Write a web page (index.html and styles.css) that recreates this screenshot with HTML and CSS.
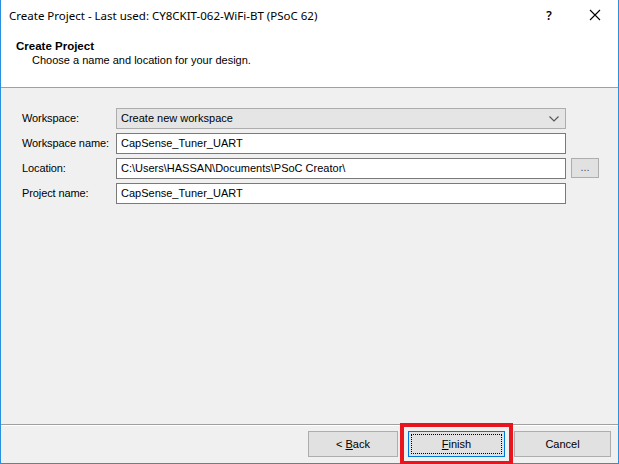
FILE: index.html
```html
<!DOCTYPE html>
<html lang="en">
<head>
  <meta charset="UTF-8">
  <title>Create Project</title>
  <link rel="stylesheet" href="styles.css">
</head>
<body>
  <div class="dialog">
    <div class="titlebar">
      <span class="title">Create Project - Last used: CY8CKIT-062-WiFi-BT (PSoC 62)</span>
      <span class="help">?</span>
      <span class="close">
        <svg width="12" height="12" viewBox="0 0 12 12"><path d="M1 1L11 11M11 1L1 11" stroke="#000" stroke-width="1.1" fill="none"/></svg>
      </span>
    </div>

    <div class="header">
      <div class="header-title">Create Project</div>
      <div class="header-sub">Choose a name and location for your design.</div>
    </div>

    <div class="content">
      <div class="form">
        <label>Workspace:</label>
        <div class="combo">
          <span>Create new workspace</span>
          <svg width="10" height="6" viewBox="0 0 10 6"><path d="M0.5 0.5L5 5L9.5 0.5" stroke="#555" stroke-width="1.1" fill="none"/></svg>
        </div>
        <span></span>

        <label>Workspace name:</label>
        <div class="textbox">CapSense_Tuner_UART</div>
        <span></span>

        <label>Location:</label>
        <div class="textbox">C:\Users\HASSAN\Documents\PSoC Creator\</div>
        <button class="browse">...</button>

        <label>Project name:</label>
        <div class="textbox">CapSense_Tuner_UART</div>
        <span></span>
      </div>
    </div>

    <div class="footer">
      <button class="btn btn-back">&lt; <u>B</u>ack</button>
      <button class="btn btn-default"><span class="focus"><u>F</u>inish</span></button>
      <button class="btn">Cancel</button>
    </div>
  </div>
</body>
</html>
```

FILE: styles.css
```css
body {
  margin: 0;
  font-family: "Liberation Sans", Arial, sans-serif;
  font-size: 11px;
  color: #000;
}

.dialog {
  width: 619px;
  height: 464px;
  box-sizing: border-box;
  border: 1px solid #2b8fe0;
  border-top: none;
  display: flex;
  flex-direction: column;
  background: #f0f0f0;
}

.titlebar {
  height: 30px;
  background: #fff;
  display: flex;
  align-items: center;
  padding-left: 8px;
}
.title {
  flex: 1;
  font-family: "Noto Sans", sans-serif;
  font-size: 11.5px;
  color: #000;
}
.help {
  font-family: "Noto Sans", sans-serif;
  font-size: 12px;
  font-weight: 600;
  width: 46px;
  text-align: center;
}
.close {
  width: 46px;
  display: flex;
  justify-content: center;
}

.header {
  height: 58px;
  background: #fff;
  border-bottom: 1px solid #a0a0a0;
  padding: 9px 0 0 15px;
  box-sizing: border-box;
}
.header-title {
  font-weight: bold;
  font-size: 11.5px;
  line-height: 14px;
}
.header-sub {
  padding-left: 16px;
  line-height: 14px;
}

.content {
  flex: 1;
  padding: 20px 0 0 21px;
}

.form {
  display: grid;
  grid-template-columns: 89px 450px 28px;
  grid-auto-rows: 21px;
  column-gap: 5px;
  row-gap: 4px;
  align-items: center;
}
.form label {
  line-height: 21px;
  letter-spacing: -0.1px;
}

.textbox, .combo {
  height: 21px;
  box-sizing: border-box;
  line-height: 19px;
  padding-left: 4px;
  white-space: nowrap;
}
.textbox {
  background: #fff;
  border: 1px solid #7a7a7a;
}
.combo {
  background: #e5e5e5;
  border: 1px solid #adadad;
  display: flex;
  align-items: center;
  justify-content: space-between;
  padding-right: 6px;
}

.browse {
  height: 20px;
  width: 28px;
  background: #e1e1e1;
  border: 1px solid #adadad;
  font-family: inherit;
  font-size: 11px;
  color: #555;
  padding: 0 0 3px;
  align-self: start;
}

.footer {
  height: 39px;
  box-sizing: border-box;
  border-top: 1px solid #a0a0a0;
  box-shadow: inset 0 1px 0 #fff;
  display: flex;
  justify-content: flex-end;
  align-items: center;
  gap: 9px;
  padding: 0 7px 1px 0;
}

.btn {
  width: 97px;
  height: 26px;
  background: #e1e1e1;
  border: 1px solid #adadad;
  font-family: "Liberation Sans", Arial, sans-serif;
  font-size: 11px;
  color: #000;
  padding: 0;
}
.btn-back {
  width: 90px;
  margin-right: 1px;
}
.btn-default {
  border-color: #0078d7;
  padding: 2px;
  outline: 4px solid #e8151f;
  outline-offset: 4px;
}
.focus {
  display: flex;
  height: 100%;
  align-items: center;
  justify-content: center;
  border: 1px dotted #000;
  box-sizing: border-box;
}
```
